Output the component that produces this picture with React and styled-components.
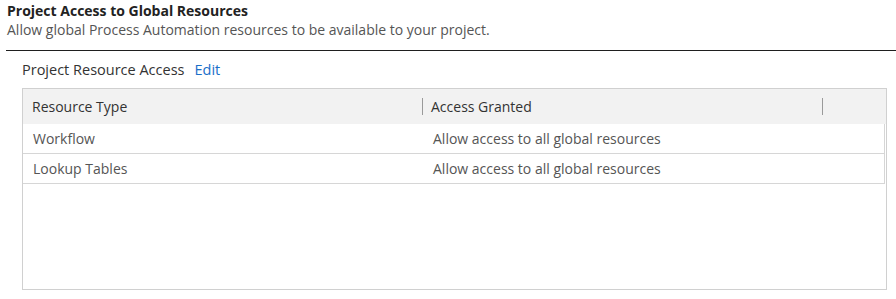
import React from "react";
import styled, { createGlobalStyle } from "styled-components";

const GlobalStyle = createGlobalStyle`
  body {
    margin: 0;
    background: #fff;
    font-family: "Open Sans", "Liberation Sans", sans-serif;
    color: #333;
  }
`;

const Page = styled.div`
  width: 896px;
  height: 299px;
  overflow: hidden;
`;

const SectionHeader = styled.header`
  margin-left: 6px;
  padding: 2px 0 11px 1px;
  border-bottom: 1px solid #1f1f1f;
`;

const Title = styled.h2`
  margin: 0;
  font-size: 14px;
  line-height: 18px;
  font-weight: 700;
  color: #222;
`;

const Description = styled.p`
  margin: 0;
  font-size: 14px;
  line-height: 19px;
  color: #555;
`;

const Body = styled.section`
  margin-left: 22px;
  width: 865px;
`;

const FieldLabel = styled.div`
  display: flex;
  align-items: center;
  gap: 10px;
  height: 37px;
  font-size: 14.5px;
  color: #333;
`;

const EditLink = styled.a`
  color: #1a6fc9;
  text-decoration: none;
  cursor: pointer;
`;

const Table = styled.div`
  box-sizing: border-box;
  height: 202px;
  border: 1px solid #d0d0d0;
`;

const HeaderRow = styled.div`
  display: grid;
  grid-template-columns: 399px 400px 1fr;
  height: 35px;
  background: #f2f2f2;
`;

const HeaderCell = styled.div`
  position: relative;
  display: flex;
  align-items: center;
  padding-left: 9px;
  font-size: 14px;
  color: #333;

  ${(p) =>
    p.$divider &&
    `
    &::before {
      content: "";
      position: absolute;
      left: 0;
      top: 9px;
      height: 17px;
      border-left: 1px solid #9a9a9a;
    }
  `}
`;

const Row = styled.div`
  display: grid;
  grid-template-columns: 400px 1fr;
  height: 29px;
  margin-right: 1px;
  border-bottom: 1px solid #d6d6d6;
  border-right: 1px solid #d6d6d6;
  align-items: center;
  font-size: 14px;
  color: #555;
`;

const Cell = styled.div`
  padding-left: 10px;
`;

const resources = [
  { type: "Workflow", access: "Allow access to all global resources" },
  { type: "Lookup Tables", access: "Allow access to all global resources" },
];

const App = () => {
  return (
    <Page>
      <GlobalStyle />
      <SectionHeader>
        <Title>Project Access to Global Resources</Title>
        <Description>
          Allow global Process Automation resources to be available to your project.
        </Description>
      </SectionHeader>
      <Body>
        <FieldLabel>
          <span>Project Resource Access</span>
          <EditLink>Edit</EditLink>
        </FieldLabel>
        <Table>
          <HeaderRow>
            <HeaderCell>Resource Type</HeaderCell>
            <HeaderCell $divider>Access Granted</HeaderCell>
            <HeaderCell $divider />
          </HeaderRow>
          {resources.map((r) => (
            <Row key={r.type}>
              <Cell>{r.type}</Cell>
              <Cell>{r.access}</Cell>
            </Row>
          ))}
        </Table>
      </Body>
    </Page>
  );
};

export default App;
